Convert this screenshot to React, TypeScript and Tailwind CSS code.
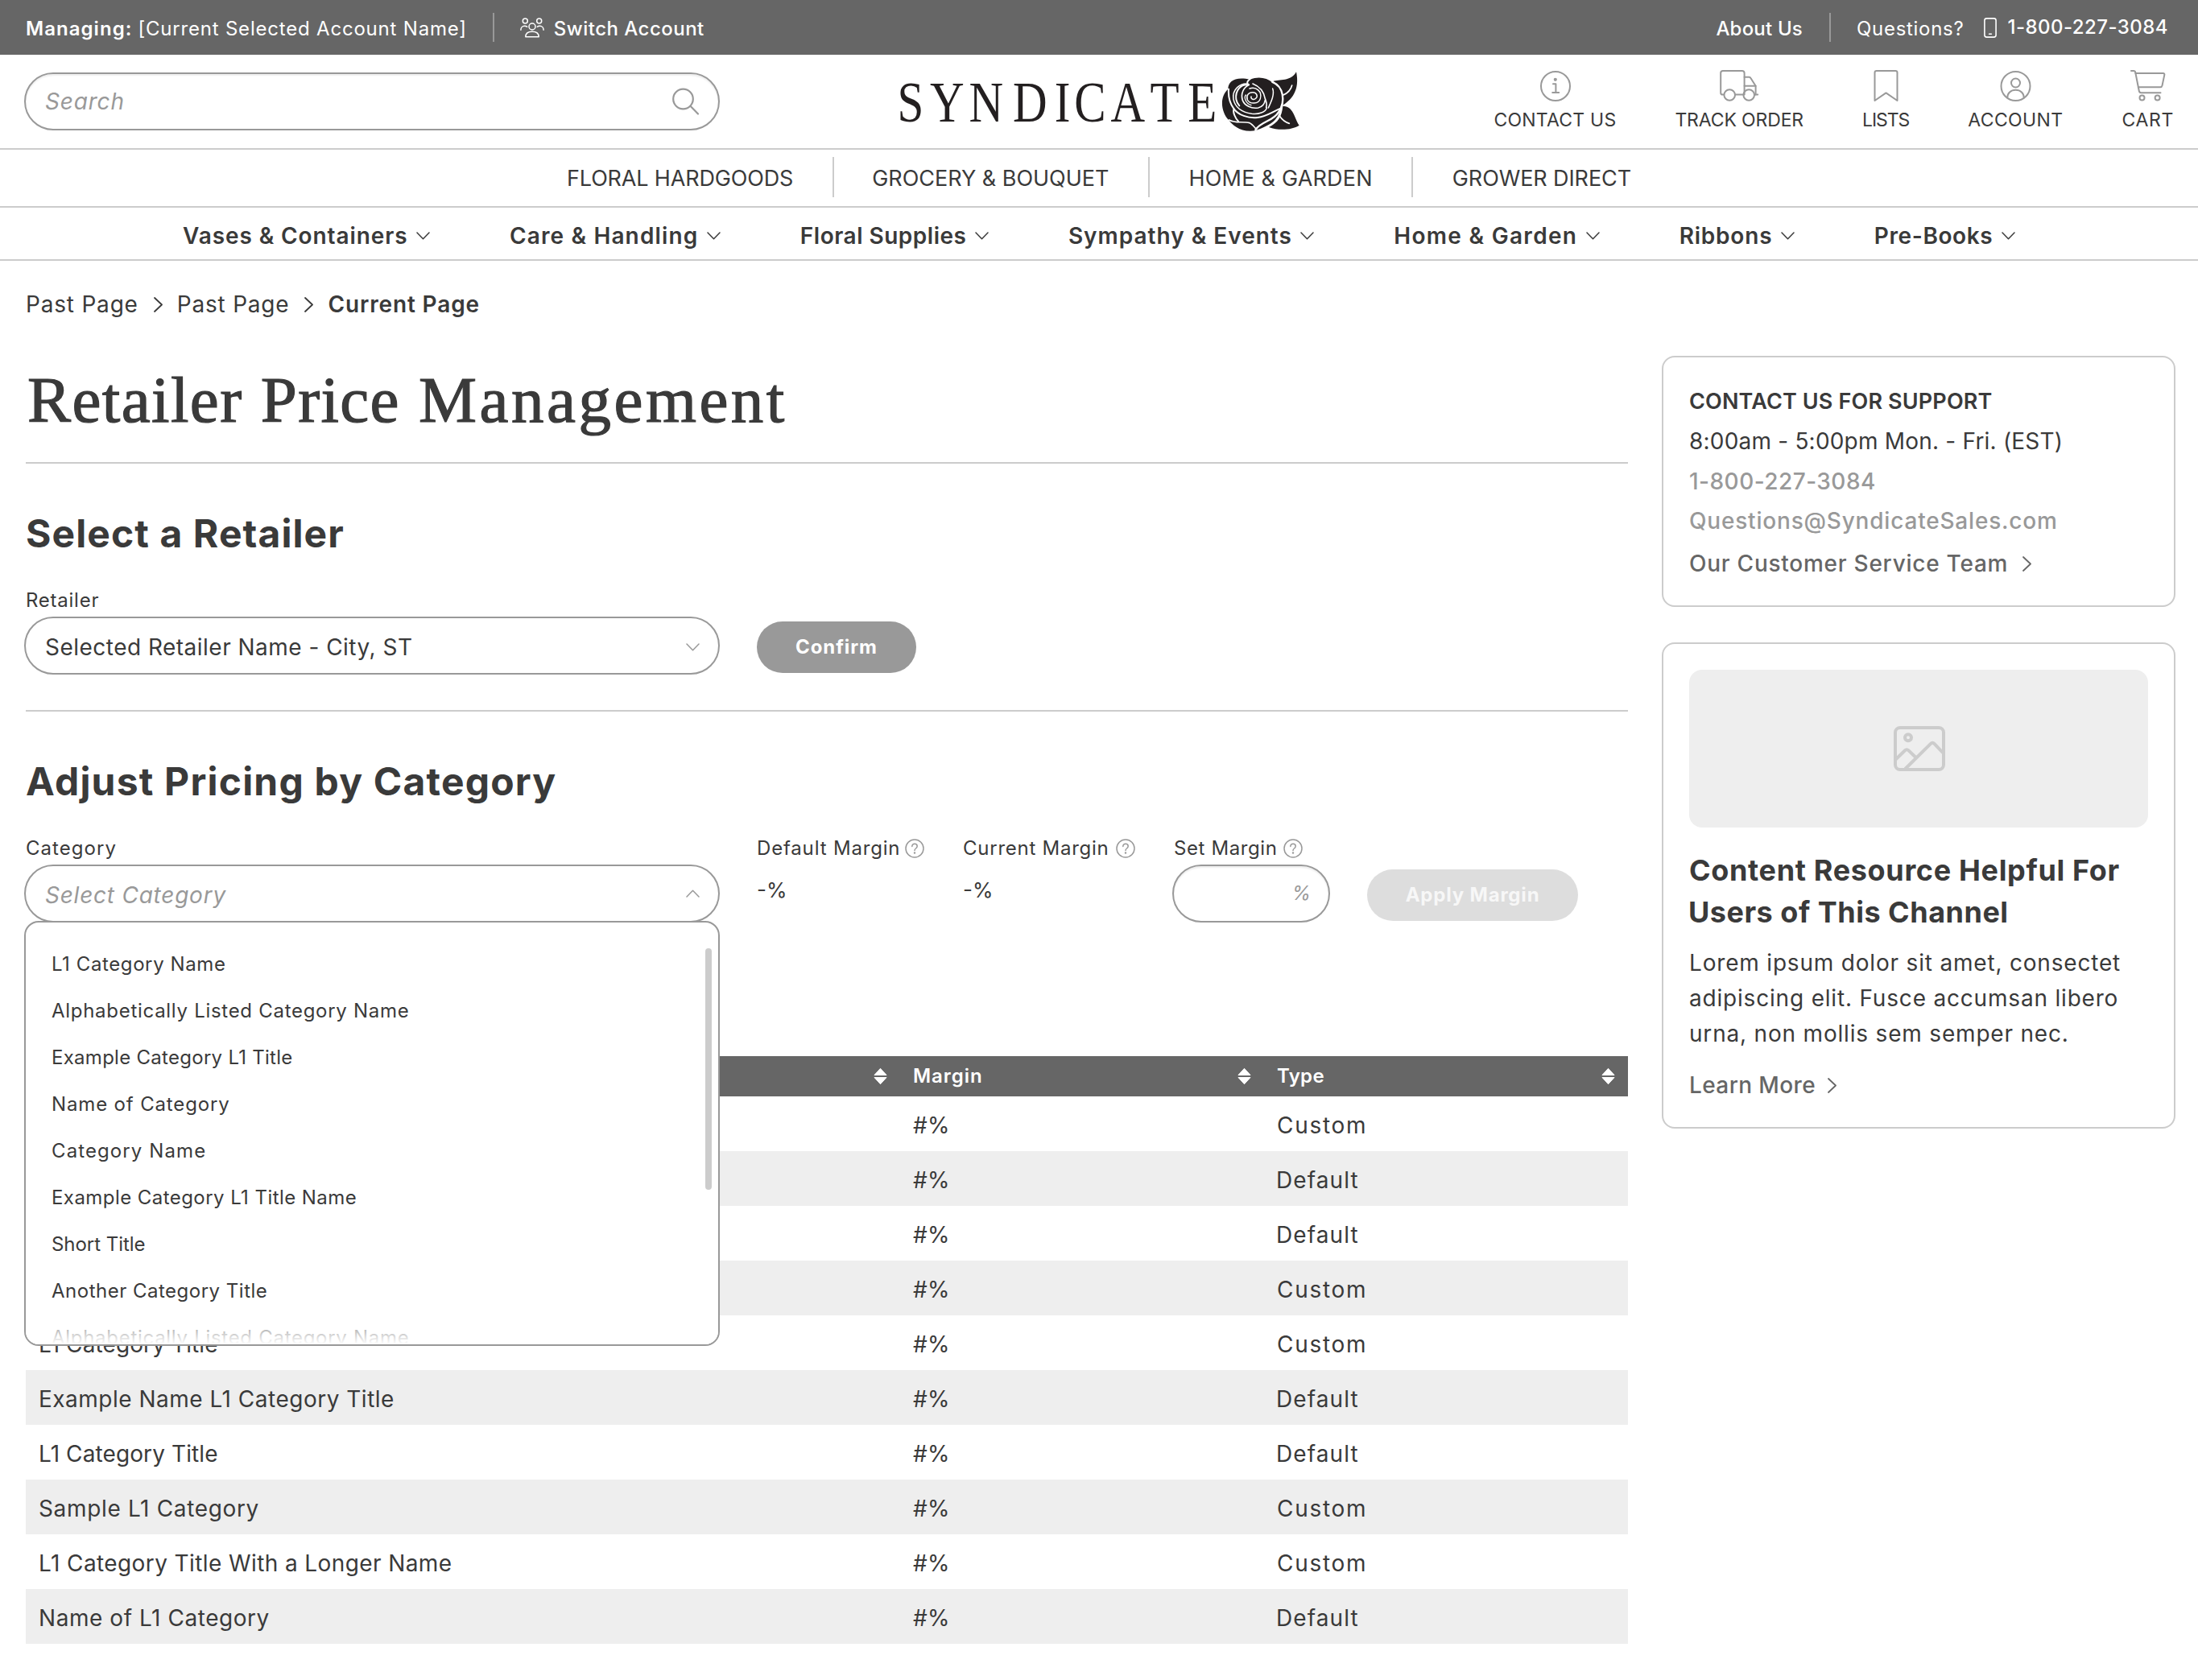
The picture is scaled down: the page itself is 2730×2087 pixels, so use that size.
import React, { useState } from "react";

const departments = [
  { name: "FLORAL HARDGOODS", className: "tracking-[-0.16px] mr-[49px]" },
  { name: "GROCERY & BOUQUET", className: "tracking-[-0.02px] ml-[47px] mr-[49px]" },
  { name: "HOME & GARDEN", className: "tracking-[0.22px] ml-[48px] mr-[48px]" },
  { name: "GROWER DIRECT", className: "tracking-[-0.1px] ml-[49px]" },
];

const categories = [
  { name: "Vases & Containers", className: "tracking-[0.9px]" },
  { name: "Care & Handling", className: "tracking-[1.14px]" },
  { name: "Floral Supplies", className: "tracking-[0.5px]" },
  { name: "Sympathy & Events", className: "tracking-[0.99px]" },
  { name: "Home & Garden", className: "tracking-[1.29px]" },
  { name: "Ribbons", className: "tracking-[0.79px]" },
  { name: "Pre-Books", className: "tracking-[0.61px]" },
];

const options = [
  { name: "L1 Category Name", className: "tracking-[0.6px]" },
  { name: "Alphabetically Listed Category Name", className: "tracking-[0.71px]" },
  { name: "Example Category L1 Title", className: "tracking-[0.28px]" },
  { name: "Name of Category", className: "tracking-[0.85px]" },
  { name: "Category Name", className: "tracking-[1.1px]" },
  { name: "Example Category L1 Title Name", className: "tracking-[0.44px]" },
  { name: "Short Title", className: "tracking-[-0.05px]" },
  { name: "Another Category Title", className: "tracking-[0.5px]" },
  { name: "Alphabetically Listed Category Name", className: "tracking-[0.71px]" },
];

const rows = [
  { name: "", type: "Custom", className: "" },
  { name: "", type: "Default", className: "" },
  { name: "", type: "Default", className: "" },
  { name: "", type: "Custom", className: "" },
  { name: "L1 Category Title", type: "Custom", className: "tracking-[0.1px]" },
  { name: "Example Name L1 Category Title", type: "Default", className: "tracking-[0.5px]" },
  { name: "L1 Category Title", type: "Default", className: "tracking-[0.1px]" },
  { name: "Sample L1 Category", type: "Custom", className: "tracking-[0.65px]" },
  { name: "L1 Category Title With a Longer Name", type: "Custom", className: "tracking-[0.4px]" },
  { name: "Name of L1 Category", type: "Default", className: "tracking-[0.55px]" },
];

function ChevronDown({ className = "" }: { className?: string }) {
  return (
    <svg className={`shrink-0 ${className}`} width="17" height="10" viewBox="0 0 17 10" fill="none" stroke="currentColor" strokeWidth="1.5" strokeLinecap="round" strokeLinejoin="round">
      <path d="M1 1l7.5 7.8L16 1" />
    </svg>
  );
}

function ChevronRight({ className = "" }: { className?: string }) {
  return (
    <svg className={`shrink-0 ${className}`} width="11" height="19" viewBox="0 0 11 19" fill="none" stroke="currentColor" strokeWidth="1.8" strokeLinecap="round" strokeLinejoin="round">
      <path d="M1 1l9 8.5L1 18" />
    </svg>
  );
}

function SortIcon() {
  return (
    <svg width="17" height="22" viewBox="0 0 17 22" fill="white" stroke="white" strokeLinejoin="round">
      <path d="M8.5 1.3L16 9.5H1z" />
      <path d="M8.5 20.7L16 12.5H1z" />
    </svg>
  );
}

function HelpIcon() {
  return (
    <svg width="24" height="24" viewBox="0 0 24 24" fill="none" stroke="#999" strokeWidth="1.5" strokeLinecap="round">
      <circle cx="12" cy="12" r="11" />
      <path d="M8.8 9.4c0-1.9 1.4-3.1 3.2-3.1s3.2 1.2 3.2 2.9c0 1.3-.7 2-1.7 2.8-1 .7-1.5 1.2-1.5 2.4" />
      <circle cx="12" cy="17.4" r="0.5" fill="#999" />
    </svg>
  );
}

function SwitchIcon() {
  return (
    <svg width="30" height="25" viewBox="0 0 30 25" fill="none" stroke="white" strokeWidth="1.5" strokeLinecap="round" strokeLinejoin="round">
      <circle cx="6.3" cy="3.9" r="3" />
      <circle cx="23.7" cy="3.9" r="3" />
      <circle cx="15" cy="11" r="4" />
      <path d="M.9 15.2c0-2.9 2-4.9 4.6-4.9 1.2 0 2.3.3 3.2 1" />
      <path d="M29.1 15.2c0-2.9-2-4.9-4.6-4.9-1.2 0-2.3.3-3.2 1" />
      <path d="M6.8 23.8c0-4 3-6.6 8.2-6.6s8.2 2.6 8.2 6.6z" />
    </svg>
  );
}

function Logo() {
  return (
    <div className="flex items-start ml-[219px] mt-[14px]">
      <svg width="401" height="84" viewBox="-4 0 401 84" className="overflow-visible">
        <text
          transform="scale(0.82 1)"
          y="69.2"
          x="-3 46.4 105.5 172 235 265 320 380 437"
          fontFamily="Liberation Serif, serif"
          fontSize="72"
          fill="#231f20"
        >
          SYNDICATE
        </text>
      </svg>
      <Rose />
    </div>
  );
}

function Rose() {
  return (
    <svg width="110" height="86" viewBox="0 0 330 258" className="-ml-[4px]">
      <g fill="#231f20">
        <path d="M214 57C235 50 282 58 300 22C308 62 306 112 250 146C255 115 250 75 214 57Z" />
        <path d="M250 149C290 150 292 192 311 221C285 238 235 242 198 228C232 210 246 190 250 149Z" />
        <path d="M46 86C46 58 70 38 128 50C160 38 190 44 212 62C250 66 264 118 240 160C232 205 200 222 150 240C95 250 62 220 50 203C20 175 12 115 46 86Z" />
      </g>
      <g fill="none" stroke="white" strokeLinecap="round" strokeLinejoin="round">
        <path strokeWidth="6" d="M48 86C46 116 54 142 68 160C62 172 74 196 84 206" />
        <path strokeWidth="7" d="M211 60C252 76 262 130 234 172C212 208 170 204 148 238" />
        <path strokeWidth="6" d="M128 48C116 58 114 64 123 70C92 66 72 92 76 124C78 134 82 142 88 148" />
        <path strokeWidth="5" d="M124 70C104 80 92 102 100 128C108 148 132 160 158 156C176 152 182 140 184 128" />
        <path strokeWidth="4.5" d="M118 66C92 64 60 86 66 124C72 152 96 172 134 178C160 181 186 172 190 156" />
        <path strokeWidth="5" d="M138 66C168 78 180 98 184 122C190 136 190 148 188 154" />
        <path strokeWidth="4.5" d="M212 84C220 106 206 134 196 156" />
        <path strokeWidth="6" d="M68 160C84 182 120 196 156 192C190 188 212 170 242 158" />
        <path strokeWidth="5" d="M50 201C70 214 100 206 126 212C136 216 142 226 152 236" />
        <path strokeWidth="4.5" d="M126 84C150 76 174 94 166 122C160 142 128 144 118 126C112 110 122 98 138 98C152 98 158 112 150 120C142 128 130 124 132 114" />
        <path strokeWidth="4" d="M112 108C104 118 112 140 132 146" />
        <path strokeWidth="5" d="M252 108C270 100 280 88 284 72" />
        <path strokeWidth="5" d="M236 184C248 202 258 210 274 214" />
      </g>
    </svg>
  );
}

function Header() {
  return (
    <header>
      <div className="h-[68px] bg-[#666] text-white text-[24px] flex items-center pl-[32px] pr-[37px]">
        <span className="font-semibold tracking-[1.04px] pt-[4px] mr-[7px]">Managing:</span>
        <span className="tracking-[0.8px] pt-[4px]">[Current Selected Account Name]</span>
        <div className="w-[2px] h-[36px] bg-[#999] ml-[32px] mr-[32px]" />
        <SwitchIcon />
        <span className="font-medium tracking-[0.48px] pt-[4px] ml-[12px]">Switch Account</span>
        <span className="font-medium tracking-[0.19px] pt-[4px] ml-auto">About Us</span>
        <div className="w-[2px] h-[36px] bg-[#999] ml-[33px] mr-[32px]" />
        <span className="tracking-[0.71px] pt-[4px] mr-[25px]">Questions?</span>
        <svg width="16" height="25" viewBox="0 0 16 25" fill="none" stroke="white" strokeWidth="1.6" strokeLinecap="round">
          <rect x="0.9" y="0.9" width="14.2" height="23.2" rx="2.6" />
          <path d="M6.6 20.2h2.8" />
        </svg>
        <span className="font-medium tracking-[0.46px] ml-[13px]">1-800-227-3084</span>
      </div>

      <div className="h-[118px] border-b-2 border-[#ccc] flex px-[30px]">
        <div className="w-[864px] h-[72px] mt-[22px] border-2 border-[#999] rounded-full shadow-[inset_0_2px_2px_#eee] flex items-center justify-between pl-[24px] pr-[23px]">
          <span className="italic text-[28px] tracking-[0.81px] text-[#999]">Search</span>
          <svg width="35" height="35" viewBox="0 0 35 35" fill="none" stroke="#999" strokeWidth="2.2" strokeLinecap="round">
            <circle cx="14.5" cy="14" r="12.3" />
            <path d="M23.5 22.8L33 32.5" />
          </svg>
        </div>
        <Logo />
        <nav className="ml-auto flex gap-[73px] pt-[18px] text-[23px] leading-[24px]">
          <a className="flex flex-col items-center gap-[11px] tracking-[0.23px]">
            <svg width="40" height="40" viewBox="0 0 40 40" fill="none" stroke="#999" strokeWidth="2" strokeLinecap="round" strokeLinejoin="round">
              <circle cx="21" cy="21" r="18" />
              <path d="M18 18.2h3.4v10.6M17.2 29h8" />
              <circle cx="20.8" cy="12.8" r="1.1" fill="#999" />
            </svg>
            CONTACT US
          </a>
          <a className="flex flex-col items-center gap-[11px] tracking-[-0.13px]">
            <svg width="49" height="40" viewBox="0 0 49 40" fill="none" stroke="#999" strokeWidth="2" strokeLinecap="round" strokeLinejoin="round">
              <path d="M5.2 31.6H3.6C2.2 31.6 1.2 30.6 1.2 29.2V4.6C1.2 3 2.4 1.9 3.9 1.9h23.8c1.7 0 2.9 1.2 2.9 2.8v26.9H19" />
              <path d="M30.6 9.8h5.8c1 0 1.7.5 2.2 1.4l6 9.6v10.8" />
              <path d="M30.6 20.8h14M43.2 31.6h4" />
              <circle cx="12.2" cy="32" r="6.8" />
              <circle cx="36.2" cy="32" r="6.8" />
            </svg>
            TRACK ORDER
          </a>
          <a className="flex flex-col items-center gap-[11px] tracking-[-1.07px]">
            <svg width="31" height="40" viewBox="0 0 31 40" fill="none" stroke="#999" strokeWidth="2" strokeLinecap="round" strokeLinejoin="round">
              <path d="M1.5 39V4.2c0-1.3 1-2.3 2.3-2.3h23.4c1.3 0 2.3 1 2.3 2.3V39l-14-9.6z" />
            </svg>
            LISTS
          </a>
          <a className="flex flex-col items-center gap-[11px] tracking-[0.38px]">
            <svg width="40" height="40" viewBox="0 0 40 40" fill="none" stroke="#999" strokeWidth="2" strokeLinecap="round" strokeLinejoin="round">
              <circle cx="20.5" cy="21" r="18" />
              <circle cx="20.5" cy="17" r="5.5" />
              <path d="M10.2 35.5c0-5.8 4.2-9.7 10.3-9.7s10.3 3.9 10.3 9.7" />
            </svg>
            ACCOUNT
          </a>
          <a className="flex flex-col items-center gap-[11px] tracking-[0.66px]">
            <svg width="44" height="40" viewBox="0 0 44 40" fill="none" stroke="#999" strokeWidth="2" strokeLinecap="round" strokeLinejoin="round">
              <path d="M1 1.9h3c1.3 0 2 .6 2.2 1.9L10.8 27c.3 1.5 1.1 2.2 2.5 2.2h24.2" />
              <path d="M6.4 5h34.2c1.4 0 2 .8 1.7 2.1l-2.8 13.3c-.3 1.3-1 1.9-2.3 1.9H9.8" />
              <circle cx="14.5" cy="35.6" r="3" />
              <circle cx="33.6" cy="35.6" r="3" />
            </svg>
            CART
          </a>
        </nav>
      </div>

      <nav className="h-[72px] border-b-2 border-[#ccc] flex items-center justify-center text-[27px]">
        {departments.map((item, i) => (
          <React.Fragment key={item.name}>
            {i > 0 && <div className="w-[2px] h-[50px] mb-[2px] bg-[#ccc]" />}
            <span className={`pt-[2px] ${item.className}`}>{item.name}</span>
          </React.Fragment>
        ))}
      </nav>

      <nav className="h-[66px] border-b-2 border-[#ccc] flex items-center pl-[227px] gap-[99px] text-[28px] font-semibold">
        {categories.map((item) => (
          <a key={item.name} className="flex items-center gap-[10.5px] pt-[5px]">
            <span className={item.className}>{item.name}</span>
            <ChevronDown />
          </a>
        ))}
      </nav>
    </header>
  );
}

function CategorySelect() {
  const [open, setOpen] = useState(true);

  return (
    <div className="relative w-[864px]">
      <div
        onClick={() => setOpen(!open)}
        className="h-[72px] border-2 border-[#999] rounded-full flex items-center justify-between pl-[24px] pr-[23px]"
      >
        <span className="italic text-[28px] tracking-[0.77px] text-[#999] pt-[4px]">Select Category</span>
        <ChevronDown className="rotate-180 text-[#999]" />
      </div>

      {open && (
        <div className="absolute z-10 top-[70px] left-0 w-full h-[528px] border-2 border-[#999] rounded-[18px] bg-white overflow-hidden pt-[23px] pl-[32px]">
          {options.map((option, i) => (
            <div key={i} className={`h-[58px] leading-[58px] text-[24px] ${option.className}`}>
              {option.name}
            </div>
          ))}
          <div className="absolute right-[8px] top-[32px] w-[8px] h-[300px] rounded-full bg-[#ccc]" />
          <div className="absolute left-0 bottom-0 w-full h-[42px] bg-linear-to-b from-white/20 to-white" />
        </div>
      )}
    </div>
  );
}

function PriceTable() {
  return (
    <div className="mt-[166px]">
      <div className="h-[50px] bg-[#666] text-white text-[24px] font-semibold grid grid-cols-[1086px_452px_452px]">
        <div className="flex items-center justify-end px-[16px]">
          <SortIcon />
        </div>
        <div className="flex items-center justify-between px-[16px] tracking-[0.95px]">
          Margin <SortIcon />
        </div>
        <div className="flex items-center justify-between px-[16px] tracking-[0.32px]">
          Type <SortIcon />
        </div>
      </div>
      {rows.map((row, i) => (
        <div
          key={i}
          className="h-[68px] grid grid-cols-[1086px_452px_452px] items-center text-[28px] even:bg-white odd:bg-[#eee]"
        >
          <span className={`pl-[16px] pt-[4px] ${row.className}`}>{row.name}</span>
          <span className="pl-[16px] pt-[4px] tracking-[0.3px]">#%</span>
          <span className={row.type === "Custom" ? "pl-[16px] pt-[4px] tracking-[1.7px]" : "pl-[15px] pt-[4px] tracking-[1.1px]"}>
            {row.type}
          </span>
        </div>
      ))}
    </div>
  );
}

function Sidebar() {
  return (
    <aside className="w-[638px] ml-[42px] flex flex-col gap-[44px]">
      <div className="h-[312px] border-2 border-[#ccc] rounded-[16px] pt-[30px] pl-[32px] text-[28px] leading-[50px] whitespace-nowrap">
        <p className="font-semibold text-[27px] tracking-[0.14px]">CONTACT US FOR SUPPORT</p>
        <p className="tracking-[0.2px] -mt-px">8:00am - 5:00pm Mon. - Fri. (EST)</p>
        <p className="font-medium tracking-[0.47px] text-[#999]">1-800-227-3084</p>
        <p className="font-medium tracking-[0.8px] text-[#999] -mt-px">Questions@SyndicateSales.com</p>
        <a className="mt-[3px] flex items-center gap-[18px] font-medium tracking-[0.75px] text-[#666]">
          Our Customer Service Team <ChevronRight />
        </a>
      </div>

      <div className="h-[604px] border-2 border-[#ccc] rounded-[16px] p-[32px] whitespace-nowrap">
        <div className="h-[196px] rounded-[16px] bg-[#eee] flex items-center justify-center">
          <svg width="64" height="56" viewBox="0 0 64 56" fill="none" stroke="#ccc" strokeWidth="4" strokeLinecap="round" strokeLinejoin="round" className="ml-[2px]">
            <rect x="2" y="2" width="60" height="52" rx="6" />
            <circle cx="18" cy="14.3" r="4" />
            <path d="M3 41L14 30.2c1.400-1.400 3-1.400 4.400 0L27 38.500" />
            <path d="M14.5 53L46 21.8c1.400-1.500 3.100-1.500 4.500 0L61 33" />
          </svg>
        </div>
        <h3 className="mt-[27px] text-[36px] leading-[52px] font-bold">
          <span className="block tracking-[0.66px]">Content Resource Helpful For</span>
          <span className="block tracking-[0.5px] -ml-px">Users of This Channel</span>
        </h3>
        <p className="mt-[15px] text-[28px] leading-[44px] tracking-[0.81px]">
          Lorem ipsum dolor sit amet, consectet
          <br />
          adipiscing elit. Fusce accumsan libero
          <br />
          urna, non mollis sem semper nec.
        </p>
        <a className="mt-[22px] flex items-center gap-[15px] text-[28px] leading-[40px] font-medium tracking-[0.4px] text-[#666]">
          Learn More <ChevronRight />
        </a>
      </div>
    </aside>
  );
}

function App() {
  return (
    <div className="w-[2730px] h-[2087px] overflow-hidden bg-white text-[#3a3a3a] font-[Inter,sans-serif]">
      <Header />

      <main className="pl-[32px] pt-[36px]">
        <div className="flex items-center h-[36px] text-[28px]">
          <span className="tracking-[0.8px]">Past Page</span>
          <ChevronRight className="ml-[19px] mr-[18px]" />
          <span className="tracking-[0.8px]">Past Page</span>
          <ChevronRight className="ml-[19px] mr-[18px]" />
          <span className="font-semibold tracking-[0.85px]">Current Page</span>
        </div>

        <div className="flex mt-[46px]">
          <div className="w-[1990px]">
            <h1 className="mt-[13px] ml-[2px] font-['Liberation_Serif',serif] text-[81px] leading-[84px] [-webkit-text-stroke:1.2px_#3a3a3a]">
              <span className="tracking-[1.4px] mr-[2px]">Retailer</span> <span className="tracking-[1.3px]">Price</span>{" "}
              <span className="tracking-[3.5px] ml-[3px]">Management</span>
            </h1>
            <hr className="mt-[35px] border-t-2 border-[#ccc]" />

            <h2 className="mt-[57px] text-[48px] leading-[60px] font-bold tracking-[1.09px]">Select a Retailer</h2>
            <div className="mt-[38px] -ml-[2px] flex">
              <div className="w-[864px]">
                <label className="block pl-[2px] text-[24px] leading-[30px] tracking-[0.75px]">Retailer</label>
                <div className="mt-[5px] h-[72px] border-2 border-[#999] rounded-full flex items-center justify-between pl-[24px] pr-[23px]">
                  <span className="text-[28px] tracking-[0.48px] pt-[4px]">Selected Retailer Name - City, ST</span>
                  <ChevronDown className="text-[#999] mt-[4px]" />
                </div>
              </div>
              <button className="ml-[46px] mt-[41px] w-[198px] h-[64px] rounded-full bg-[#999] text-white text-[24px] font-bold tracking-[0.9px]">
                Confirm
              </button>
            </div>
            <hr className="mt-[44px] border-t-2 border-[#ccc]" />

            <h2 className="mt-[57px] text-[48px] leading-[60px] font-bold tracking-[1.2px]">Adjust Pricing by Category</h2>
            <div className="mt-[38px] -ml-[2px] flex text-[24px] leading-[30px]">
              <div className="w-[910px]">
                <label className="block pl-[2px] mb-[5px] tracking-[1.05px]">Category</label>
                <CategorySelect />
              </div>
              <div className="w-[256px]">
                <div className="flex items-center gap-[6px] tracking-[0.83px]">
                  Default Margin <HelpIcon />
                </div>
                <p className="mt-[22px] text-[26px]">-%</p>
              </div>
              <div className="w-[260px]">
                <div className="flex items-center gap-[8px] tracking-[0.75px]">
                  Current Margin <HelpIcon />
                </div>
                <p className="mt-[22px] text-[26px]">-%</p>
              </div>
              <div className="w-[242px]">
                <div className="pl-[2px] flex items-center gap-[7px] tracking-[0.6px]">
                  Set Margin <HelpIcon />
                </div>
                <div className="mt-[5px] w-[196px] h-[72px] border-2 border-[#999] rounded-full shadow-[inset_0_2px_2px_#eee] flex items-center justify-end pr-[22px]">
                  <span className="italic text-[24px] text-[#999]">%</span>
                </div>
              </div>
              <button className="mt-[41px] w-[262px] h-[64px] rounded-full bg-[#ddd] text-[#f7f7f7] text-[24px] font-bold tracking-[0.8px]">
                Apply Margin
              </button>
            </div>

            <PriceTable />
          </div>

          <Sidebar />
        </div>
      </main>
    </div>
  );
}

export default App;
